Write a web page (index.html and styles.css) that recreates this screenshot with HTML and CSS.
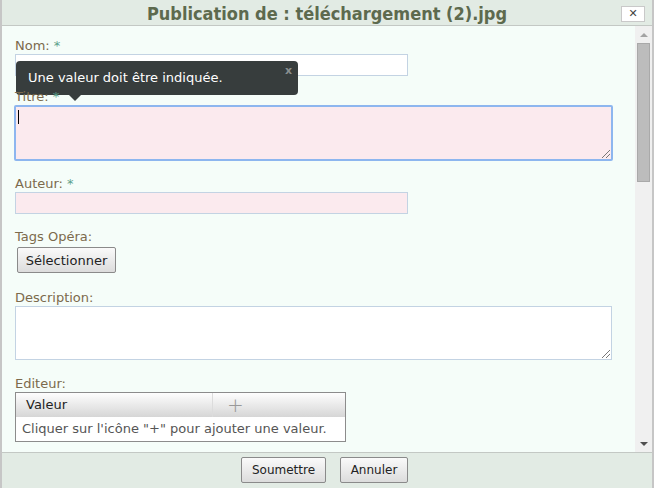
FILE: index.html
```html
<!DOCTYPE html>
<html lang="fr">
<head>
<meta charset="utf-8">
<title>Publication</title>
<link rel="stylesheet" href="styles.css">
</head>
<body>
<div class="dialog">
  <div class="titlebar">
    <span class="title">Publication de : téléchargement (2).jpg</span>
    <span class="close">&#x2715;</span>
  </div>
  <div class="content">
    <div class="form">
      <div class="field f-nom">
        <label class="lbl">Nom: <span class="req">*</span></label>
        <div class="input short"></div>
        <div class="tooltip">
          <span>Une valeur doit être indiquée.</span>
          <span class="tip-x">x</span>
        </div>
      </div>
      <div class="field f-titre">
        <label class="lbl">Titre: <span class="req">*</span></label>
        <div class="textarea invalid focus"><span class="caret"></span><span class="grip"></span></div>
      </div>
      <div class="field f-auteur">
        <label class="lbl">Auteur: <span class="req">*</span></label>
        <div class="input short invalid"></div>
      </div>
      <div class="field f-tags">
        <label class="lbl">Tags Opéra:</label>
        <button class="btn sel">Sélectionner</button>
      </div>
      <div class="field f-desc">
        <label class="lbl">Description:</label>
        <div class="textarea"><span class="grip"></span></div>
      </div>
      <div class="field f-edit">
        <label class="lbl">Editeur:</label>
        <div class="table">
          <div class="thead">
            <div class="th th-val">Valeur</div>
            <div class="th th-add">+</div>
          </div>
          <div class="tbody">Cliquer sur l'icône "+" pour ajouter une valeur.</div>
        </div>
      </div>
    </div>
    <div class="scrollbar">
      <div class="arrow up"></div>
      <div class="track"><div class="thumb"></div></div>
      <div class="arrow down"></div>
    </div>
  </div>
  <div class="footer">
    <button class="btn foot submit">Soumettre</button>
    <button class="btn foot cancel">Annuler</button>
  </div>
</div>
</body>
</html>
```
FILE: styles.css
```css
html, body {
  margin: 0;
  padding: 0;
  width: 654px;
  height: 488px;
  overflow: hidden;
  background: #f5fdf9;
}
.dialog {
  width: 654px;
  height: 488px;
  box-sizing: border-box;
  border-left: 2px solid #c6c6c6;
  border-right: 2px solid #c6c6c6;
  display: flex;
  flex-direction: column;
  font-family: "DejaVu Sans", Verdana, sans-serif;
  font-size: 13px;
}
.titlebar {
  height: 25px;
  flex: none;
  background: #e2ebe4;
  border-bottom: 1px solid #c3c8c4;
  position: relative;
  display: flex;
  justify-content: center;
  align-items: center;
}
.title {
  font-family: "DejaVu Sans Condensed", "DejaVu Sans", sans-serif;
  font-stretch: condensed;
  font-weight: bold;
  font-size: 18px;
  color: #5d6a4e;
  margin-top: 1px;
}
.close {
  position: absolute;
  right: 7px;
  top: 6px;
  width: 22px;
  height: 14px;
  background: #fff;
  border: 1px solid #c9c9c9;
  font-size: 11px;
  font-weight: bold;
  line-height: 14px;
  text-align: center;
  color: #444;
}
.content {
  flex: 1;
  display: flex;
  min-height: 0;
  background: #f5fdf9;
}
.form {
  flex: 1;
  padding: 12px 0 0 13px;
  overflow: hidden;
}
.field {
  position: relative;
  display: flex;
  flex-direction: column;
  align-items: flex-start;
}
.lbl {
  color: #7c6a4c;
  line-height: 15px;
  height: 15px;
  margin-bottom: 1px;
}
.req { color: #5aa08a; }
.input {
  box-sizing: border-box;
  height: 22px;
  border: 1px solid #c3d3e3;
  background: #fff;
  overflow: hidden;
}
.short { width: 393px; }
.invalid { background: #fbeaee; }
.textarea {
  box-sizing: border-box;
  width: 597px;
  height: 54px;
  border: 1px solid #c3d3e3;
  background: #fff;
  position: relative;
}
.textarea.invalid { background: #fbeaee; }
.textarea.focus {
  border: 2px solid #8db6ef;
  border-radius: 2px;
  width: 599px;
  height: 56px;
  margin-left: -1px;
}
.caret {
  position: absolute;
  left: 2px;
  top: 3px;
  width: 1px;
  height: 14px;
  background: #000;
}
.grip {
  position: absolute;
  right: 1px;
  bottom: 1px;
  width: 8px;
  height: 8px;
  background: linear-gradient(135deg, transparent 45%, #777 45%, #777 52%, transparent 52%, transparent 70%, #777 70%, #777 77%, transparent 77%);
}
.f-nom { margin-bottom: 13px; }
.f-titre { margin-bottom: 15px; }
.f-auteur { margin-bottom: 15px; }
.f-tags { margin-bottom: 17px; }
.f-desc { margin-bottom: 16px; }
.tooltip {
  position: absolute;
  left: 1px;
  top: 23px;
  width: 282px;
  height: 34px;
  box-sizing: border-box;
  background: #373d3d;
  border-radius: 4px;
  color: #fff;
  font-size: 13px;
  padding: 9px 0 0 12px;
  line-height: 16px;
}
.tooltip::after {
  content: "";
  position: absolute;
  left: 53px;
  bottom: -6px;
  border-left: 6px solid transparent;
  border-right: 6px solid transparent;
  border-top: 6px solid #373d3d;
}
.tip-x {
  position: absolute;
  right: 6px;
  top: 3px;
  color: #8a8f8f;
  font-weight: bold;
  font-size: 11px;
  line-height: 14px;
}
.btn {
  font-family: "DejaVu Sans", Verdana, sans-serif;
  font-size: 13px;
  color: #222;
  border: 1px solid #8a8a8a;
  border-radius: 2px;
  background: linear-gradient(#fafafa, #dcdcdc);
  padding: 0;
  margin: 0;
}
.sel {
  width: 99px;
  height: 26px;
  margin-left: 2px;
  margin-top: 2px;
}
.table {
  width: 331px;
  box-sizing: border-box;
  border: 1px solid #8c8c8c;
  background: #fff;
}
.thead {
  display: flex;
  height: 24px;
  background: linear-gradient(#fefefe, #d6d6d6);
}
.th { line-height: 24px; }
.th-val {
  width: 197px;
  padding-left: 10px;
  box-sizing: border-box;
  border-right: 1px solid #dcdcdc;
  color: #222;
}
.th-add {
  flex: 1;
  padding-left: 14px;
  color: #999;
  font-size: 20px;
  font-weight: 300;
}
.tbody {
  height: 24px;
  line-height: 24px;
  padding-left: 6px;
  color: #555;
  white-space: nowrap;
}
.scrollbar {
  width: 17px;
  flex: none;
  background: #f0f0f0;
  display: flex;
  flex-direction: column;
}
.arrow {
  height: 17px;
  display: flex;
  justify-content: center;
  align-items: center;
}
.arrow.up::before {
  content: "";
  border-left: 4px solid transparent;
  border-right: 4px solid transparent;
  border-bottom: 4px solid #a3a3a3;
}
.arrow.down::before {
  content: "";
  border-left: 4px solid transparent;
  border-right: 4px solid transparent;
  border-top: 4px solid #505050;
}
.track { flex: 1; padding: 0 2px; }
.thumb {
  height: 139px;
  box-sizing: border-box;
  background: #bcbcbc;
  border: 1px solid #a9a9a9;
}
.footer {
  height: 36px;
  flex: none;
  background: #e2ebe4;
  border-top: 1px solid #c3c8c4;
  display: flex;
  justify-content: center;
  gap: 14px;
  padding-top: 4px;
  padding-right: 5px;
  box-sizing: border-box;
}
.foot {
  height: 26px;
  font-size: 12px;
}
.submit { width: 85px; }
.cancel { width: 68px; }
```
